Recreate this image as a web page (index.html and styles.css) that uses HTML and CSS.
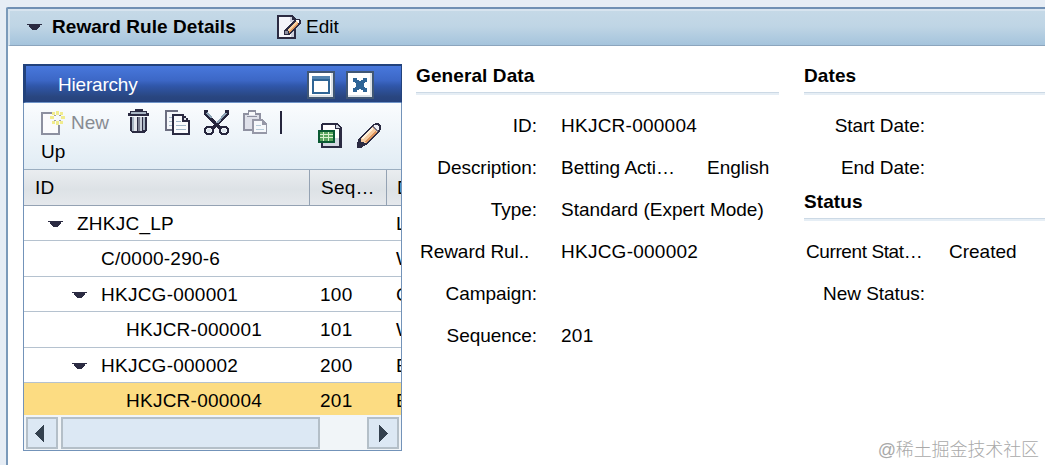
FILE: index.html
```html
<!DOCTYPE html>
<html lang="en">
<head>
  <meta charset="utf-8" />
  <title>Reward Rule Details</title>
  <link rel="stylesheet" href="styles.css">
</head>

<body>
  <section class="panel">
    <header class="panel-header">
      <svg class="caret" width="15" height="6" viewBox="0 0 15 6"><path d="M0 0h15v1h-2v2h-1v1h-1v1h-1v1H5V5H4V4H3V3H2V1H0z"/></svg>
      <h1>Reward Rule Details</h1>
      <a class="edit">
        <svg width="24" height="24" viewBox="0 0 24 24">
          <path class="ink" d="M0 0h15l4 4v20H0z"/>
          <path fill="#f4f5fa" d="M2 2h12v4h3v16H2z"/>
          <path fill="#cdd0dc" d="M13 2h2v3h3v2h-5zM14 16h3v6h-3z"/>
          <path class="ink" d="M7 20v-5L19 4h3l2 2v2L12 20z"/>
          <path fill="#f7d0a0" d="M10 15L19 6l2 2-9 9z"/>
          <path fill="#e39a5c" d="M11 17l9-9 1 1-9 9z"/>
          <path fill="#fff" d="M19 5h3v3h-1z"/>
          <path fill="#8f91a0" d="M8 16h3v3H8z"/>
        </svg>
        Edit
      </a>
    </header>

    <div class="panel-body">
      <div class="tray">
        <div class="tray-header">
          <h2>Hierarchy</h2>
          <span class="tray-button">
            <svg width="18" height="18" viewBox="0 0 18 18"><path fill="#2f6596" d="M0 0h18v18H0z"/><path fill="#5283b0" d="M0 0h18v3H0z"/><path fill="#fff" d="M2 5h14v11H2z"/></svg>
          </span>
          <span class="tray-button">
            <svg width="14" height="14" viewBox="0 0 14 14"><path fill="#2f6596" d="M0 0h4v2h2v1h2V2h2V0h4v4h-2v1h-1v4h1v1h2v4h-4v-2H8v-1H6v1H4v2H0v-4h2V9h1V5H2V4H0z"/></svg>
          </span>
        </div>

        <div class="toolbar">
          <div class="tools">
            <span class="tool tool-new">
              <svg width="24" height="24" viewBox="0 0 24 24">
                <path fill="#8d90a0" d="M0 1h12v2H2v19h15V14h2v10H0z"/>
                <path fill="#fbfbfd" d="M2 3h13v11h2v8H2z"/>
                <path fill="#f1ec8e" d="M15 0h3v4h-3zM15 10h3v4h-3zM9 5h4v3H9zM20 5h4v3h-4zM11 1h3v3h-3zM19 1h3v3h-3zM11 10h3v3h-3zM19 10h3v3h-3z"/>
                <path fill="#9fa0a0" d="M13 4h2v1h-2zM18 4h2v1h-2zM13 9h2v1h-2zM18 9h2v1h-2z"/>
              </svg>
              New
            </span>
            <svg class="tool tool-delete" width="21" height="24" viewBox="0 0 21 24">
              <path class="ink" d="M7 0h8v2h4v2h2v3H0V4h2V2h5zM2 8h17v13l-2 3H4l-2-3z"/>
              <path fill="#a9b6c4" d="M3 3h15v2H3zM4 8h3v14H4zM15 8h2v13h-2z"/>
              <path fill="#e5e8ee" d="M6 8h3v14H6z"/>
              <path fill="#777b8c" d="M10 8h2v14h-2z"/>
              <path fill="#c9cfd8" d="M12 8h2v14h-2z"/>
            </svg>
            <svg class="tool" width="25" height="25" viewBox="0 0 25 25">
              <path fill="#6c6e80" d="M0 0h13v2H2v17h5v2H0z"/>
              <path fill="#f5f7fa" d="M2 2h11v3H9v14H2z"/>
              <path fill="#a9bccc" d="M4 7h4v1H4zM4 11h4v1H4zM4 15h4v1H4z"/>
              <path class="ink" d="M7 4h12v2h2v2h2v2h2v15H7z"/>
              <path fill="#fafbfd" d="M9 6h8v6h6v11H9z"/>
              <path fill="#e2e6ec" d="M19 8h2v2h-2z"/>
              <path fill="#9fb6c8" d="M11 11h5v1h-5zM11 15h10v1H11zM11 19h10v1H11z"/>
            </svg>
            <svg class="tool" width="25" height="25" viewBox="0 0 25 25">
              <path fill="none" stroke="#25253c" stroke-width="4" d="M2 0v4l15 15M23 0v4L8 19"/>
              <path fill="none" stroke="#8ca3b5" stroke-width="2" d="M22 3l-9 10M3 3l5 5"/>
              <path fill="none" stroke="#25253c" stroke-width="2" d="M3 17h4l2 2v3l-2 2H3l-2-2v-3zM18 17h4l2 2v3l-2 2h-4l-2-2v-3z"/>
              <path fill="#dce5ed" d="M3 19h4v3H3zM18 19h4v3h-4z"/>
            </svg>
            <svg class="tool" width="25" height="25" viewBox="0 0 25 25">
              <path fill="#8f91a1" d="M0 3h5V0h8v3h5v7h-2V5H2v14h7v2H0z"/>
              <path fill="#dfe1ea" d="M2 5h14v5H9v9H2z"/>
              <path fill="#f8f9fb" d="M6 2h6v3H6z"/>
              <path fill="#8f91a1" d="M4 6h10v1H4z"/>
              <path fill="#9698a7" d="M9 9h10l5 5v10H9z"/>
              <path fill="#f6f8fb" d="M11 11h8v4h4v7H11z"/>
              <path fill="#b6cbd9" d="M13 15h5v1h-5zM13 19h8v1h-8z"/>
            </svg>
            <span class="tool-divider"></span>
            <span class="tool tool-up">Up</span>
          </div>
          <svg class="tool tool-excel" width="24" height="25" viewBox="0 0 24 25">
            <path class="ink" d="M4 0h15l5 5v20H3V2z"/>
            <path fill="#fff" d="M5 2h12v4h4v17H5z"/>
            <path fill="#d4d8e2" d="M18 2h2l2 3h-4zM17 15h4v8H5v-3h12z"/>
            <path fill="#0a5a33" d="M0 7h17v13H0z"/>
            <path fill="#d9f0ce" d="M2 9h13v9H2z"/>
            <path fill="#58a45c" d="M2 9h3v2H2zM6 9h4v2H6zM11 9h4v2h-4zM2 12h3v2H2zM6 12h4v2H6zM11 12h4v2h-4zM2 15h3v3H2zM6 15h4v3H6zM11 15h4v3h-4z"/>
          </svg>
          <svg class="tool" width="24" height="25" viewBox="0 0 24 25">
            <path class="ink" d="M0 25v-5l2-5L16 1l3-1h2l3 3v3l-1 2L9 22l-5 3z"/>
            <path fill="#f6cda2" d="M4 15L15 4l5 5L9 20l-5-1z"/>
            <path fill="#fff0d9" d="M4 15L15 4l1 2L6 16z"/>
            <path fill="#db935d" d="M8 19L18 8l2 1L9 20z"/>
            <path fill="#eef0f5" d="M17 2h3l2 2v3h-3l-2-2z"/>
            <path fill="#777080" d="M15 4l1-1 5 5-1 1z"/>
          </svg>
        </div>

        <div class="tree">
          <div class="tree-head tree-row">
            <span>ID</span><span>Seq…</span><span>D</span>
          </div>
          <div class="tree-row">
            <span class="level-1"><svg class="caret" width="15" height="6" viewBox="0 0 15 6"><path d="M0 0h15v1h-2v2h-1v1h-1v1h-1v1H5V5H4V4H3V3H2V1H0z"/></svg>ZHKJC_LP</span><span></span><span>L</span>
          </div>
          <div class="tree-row tall">
            <span class="level-2 leaf">C/0000-290-6</span><span></span><span>W</span>
          </div>
          <div class="tree-row">
            <span class="level-2"><svg class="caret" width="15" height="6" viewBox="0 0 15 6"><path d="M0 0h15v1h-2v2h-1v1h-1v1h-1v1H5V5H4V4H3V3H2V1H0z"/></svg>HKJCG-000001</span><span>100</span><span>C</span>
          </div>
          <div class="tree-row tall">
            <span class="level-3 leaf">HKJCR-000001</span><span>101</span><span>W</span>
          </div>
          <div class="tree-row">
            <span class="level-2"><svg class="caret" width="15" height="6" viewBox="0 0 15 6"><path d="M0 0h15v1h-2v2h-1v1h-1v1h-1v1H5V5H4V4H3V3H2V1H0z"/></svg>HKJCG-000002</span><span>200</span><span>E</span>
          </div>
          <div class="tree-row tall selected">
            <span class="level-3 leaf">HKJCR-000004</span><span>201</span><span>E</span>
          </div>
        </div>

        <div class="scrollbar">
          <span class="scroll-button scroll-left"><svg width="9" height="17" viewBox="0 0 9 17"><path d="M9 0v17L0 8.500z"/></svg></span>
          <span class="scroll-thumb"></span>
          <span class="scroll-button scroll-right"><svg width="9" height="17" viewBox="0 0 9 17"><path d="M0 0v17l9-8.500z"/></svg></span>
        </div>
      </div>

      <div class="form general">
        <h3>General Data</h3>
        <dl>
          <dt>ID:</dt><dd class="code">HKJCR-000004</dd>
          <dt>Description:</dt><dd><span class="desc">Betting Acti…</span><span>English</span></dd>
          <dt>Type:</dt><dd>Standard (Expert Mode)</dd>
          <dt class="cut">Reward Rul..</dt><dd class="code">HKJCG-000002</dd>
          <dt>Campaign:</dt><dd></dd>
          <dt>Sequence:</dt><dd class="code">201</dd>
        </dl>
      </div>

      <div class="form side">
        <h3>Dates</h3>
        <dl>
          <dt>Start Date:</dt><dd></dd>
          <dt>End Date:</dt><dd></dd>
        </dl>
        <h3>Status</h3>
        <dl>
          <dt class="cut">Current Stat…</dt><dd>Created</dd>
          <dt>New Status:</dt><dd></dd>
        </dl>
      </div>
    </div>
  </section>
  <div class="watermark">@稀土掘金技术社区</div>
</body>
</html>
```
FILE: styles.css
```css
* { box-sizing: border-box; }

body {
  margin: 0;
  height: 465px;
  padding: 7px 0 0 6px;
  overflow: hidden;
  background: #e6edf5;
  font-family: "Liberation Sans", Arial, sans-serif;
  font-size: 19px;
  color: #000;
}

h1, h2, h3, dl, dd { margin: 0; }
svg { display: block; flex: none; shape-rendering: crispEdges; }
.ink { fill: #2b2b42; }
.caret { fill: #2b2b42; }

.panel {
  height: 458px;
  background: #fff;
  border-left: 2px solid #7b9aba;
  border-top: 2px solid #7090b4;
  border-top-left-radius: 2px;
}

.panel-header {
  display: flex;
  align-items: center;
  height: 37px;
  padding: 0 0 2px 17px;
  background: linear-gradient(#c5d9e7, #bfd5e5 45%, #a5c4dc);
  border: 2px solid #d7e4ef;
  border-right: 0;
  border-bottom: 1px solid #8ca5bd;
}

.panel-header h1 {
  width: 235px;
  padding-left: 10px;
  font-size: 19px;
  letter-spacing: 0.06px;
}

.panel-header .caret { margin-top: -1px; }

.edit { display: flex; align-items: center; gap: 5px; }

.panel-body { display: flex; }

.tray {
  display: flex;
  flex-direction: column;
  width: 379px;
  height: 387px;
  margin: 18px 0 0 15px;
  border: 1px solid #7393b9;
}

.tray-header {
  display: flex;
  align-items: center;
  height: 39px;
  margin: -1px -1px 0;
  padding: 2px 27px 0 32px;
  gap: 11px;
  color: #fff;
  background: linear-gradient(#4878dc, #3c67c6 40%, #3057aa 55%, #294680 85%, #26427d);
  border: solid #22427c;
  border-width: 2px 1px 1px 3px;
  border-bottom-color: #6f94c8;
}

.tray-header h2 {
  flex: 1;
  font-size: 19px;
  font-weight: normal;
  letter-spacing: -0.2px;
}

.tray-button {
  display: flex;
  align-items: center;
  justify-content: center;
  width: 28px;
  height: 28px;
  background: #fff;
  border: 2px solid #405775;
  box-shadow: inset -2px -2px #dce2e8;
}

.toolbar {
  display: flex;
  height: 66px;
  padding: 7px 20px 0 17px;
  background: linear-gradient(#fafcfe, #e1ecf4);
}

.tools {
  display: flex;
  flex-wrap: wrap;
  align-content: flex-start;
  width: 277px;
  column-gap: 14px;
}

.tool-new {
  display: flex;
  align-items: center;
  gap: 6px;
  width: 73px;
  height: 25px;
  color: #888b92;
}

.tool-delete { margin: -1px 2px 0 0; }

.tool-divider {
  width: 2px;
  height: 23px;
  margin: 1px 0 0 -2px;
  background: #25253c;
}

.tool-up { width: 100%; padding-top: 6px; }
.tool-excel { margin: 13px 15px 0 0; }
.tool-excel + .tool { margin-top: 13px; }

.tree {
  flex: 1;
  overflow: hidden;
  border-top: 1px solid #9baec0;
}

.tree-row {
  display: grid;
  grid-template-columns: 285px 77px 15px;
  height: 35px;
  border-bottom: 1px solid #b5c2cf;
  letter-spacing: 0.25px;
}

.tree-row.tall { height: 36px; }

.tree-row > span {
  display: flex;
  align-items: center;
  padding: 1px 0 0 11px;
  overflow: hidden;
}

.tree-row > span:last-child { padding-left: 10px; }
.tree-row .caret { margin-right: 14px; }
.tree-row > .level-1 { padding-left: 24px; }
.tree-row > .level-2 { padding-left: 48px; }
.tree-row > .level-3 { padding-left: 73px; }
.tree-row > .leaf::before { content: ""; width: 29px; }
.tree-row.selected { background: #fcdc82; }

.tree-head {
  height: 36px;
  background: linear-gradient(#eaedf0, #dde2e6 55%, #e5e8ec);
  border-bottom-color: #94a2b3;
}

.tree-head > span + span { border-left: 1px solid #94a2b3; }

.scrollbar {
  display: flex;
  height: 35px;
  padding: 2px 2px 1px;
  background: #f1f5f8;
}

.scroll-button, .scroll-thumb {
  background: #dce8f4;
  border: 2px solid #b4bfc8;
}

.scroll-button {
  display: flex;
  align-items: center;
  justify-content: center;
  width: 32px;
  fill: #34414f;
}

.scroll-left { padding-right: 5px; }
.scroll-right { margin-left: auto; }
.scroll-thumb { width: 259px; margin-left: 3px; }

.form { padding-top: 16px; }
.general { width: 363px; margin-left: 14px; }
.side { flex: 1; margin-left: 25px; }

.form h3 {
  height: 33px;
  font-size: 19px;
  line-height: 28px;
  letter-spacing: 0.1px;
  border-bottom: 2px solid #e6eef5;
  box-shadow: inset 0 -1px #ccd9e5;
}

.form dl {
  display: grid;
  grid-template-columns: 121px 1fr;
  grid-auto-rows: 42px;
  column-gap: 24px;
  padding-top: 10px;
  line-height: 42px;
  white-space: nowrap;
}

.form dl + h3 { margin-top: -1px; }
.form dt { text-align: right; letter-spacing: -0.05px; }
.form dt.cut { padding-left: 4px; text-align: left; }
.side dt.cut { padding-left: 2px; letter-spacing: -0.4px; }
.form dd { display: flex; }
.code { letter-spacing: 0.25px; }
.desc { width: 146px; }

.watermark {
  position: absolute;
  right: 6px;
  bottom: 3px;
  font-family: "Liberation Sans", "Noto Sans CJK SC", sans-serif;
  font-size: 18px;
  line-height: 24px;
  font-weight: 300;
  letter-spacing: -0.1px;
  color: #a9a9a9;
}
```
